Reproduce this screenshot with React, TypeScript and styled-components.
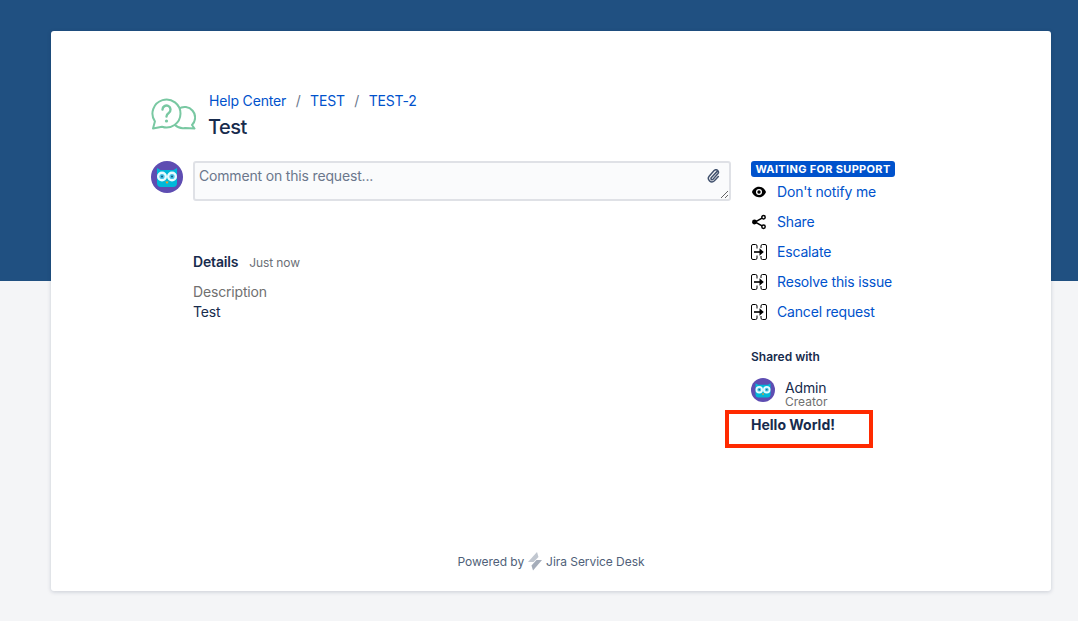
import React from "react";
import styled, { createGlobalStyle } from "styled-components";

const Global = createGlobalStyle`
  html, body {
    margin: 0;
    padding: 0;
  }
  body {
    min-height: 621px;
    background: linear-gradient(#205081 281px, #f4f5f7 281px);
    font-family: Inter, "Liberation Sans", sans-serif;
    font-size: 14px;
    letter-spacing: -0.17px;
    color: #172b4d;
    overflow: hidden;
  }
`;

const Card = styled.main`
  box-sizing: border-box;
  width: 1000px;
  height: 560px;
  margin: 31px 0 0 51px;
  padding: 60px 100px 0;
  background: #fff;
  border-radius: 3px;
  box-shadow: 0 1px 4px rgba(9, 30, 66, 0.18);
  display: flex;
  flex-direction: column;
`;

const Header = styled.header`
  display: flex;
  align-items: flex-start;
  gap: 13px;
  height: 70px;
`;

const HelpSvg = styled.svg`
  flex: none;
  margin: 7px 0 0 0;
`;

const Titles = styled.div`
  display: flex;
  flex-direction: column;
  margin-top: -1px;
`;

const Crumbs = styled.nav`
  display: flex;
  align-items: center;
  height: 20px;
  gap: 9.5px;
  font-size: 14px;
  color: #6b778c;
`;

const Link = styled.a`
  color: #0052cc;
  text-decoration: none;
`;

const Title = styled.h1`
  margin: 5px 0 0 -1px;
  font-size: 20px;
  line-height: 24px;
  font-weight: 500;
  letter-spacing: -0.5px;
  color: #172b4d;
`;

const Columns = styled.div`
  display: flex;
  flex: 1;
`;

const Activity = styled.section`
  width: 580px;
  margin-right: 20px;
`;

const CommentRow = styled.div`
  display: flex;
  gap: 10px;
`;

const CommentBox = styled.div`
  position: relative;
  width: 538px;
  height: 40px;
`;

const CommentInput = styled.textarea`
  display: block;
  box-sizing: border-box;
  width: 100%;
  height: 40px;
  padding: 3px 4px;
  border: 2px solid #dfe1e6;
  border-radius: 3px;
  background: #fafbfc;
  font: 14px/20px Inter, "Liberation Sans", sans-serif;
  letter-spacing: -0.17px;
  outline: none;
  &::placeholder {
    color: #6b778c;
    opacity: 1;
  }
`;

const Clip = styled.svg`
  position: absolute;
  top: 8px;
  right: 11px;
`;

const Details = styled.div`
  margin: 51px 0 0 42px;
`;

const DetailsHead = styled.div`
  display: flex;
  align-items: baseline;
  gap: 11px;
  line-height: 20px;
`;

const DetailsLabel = styled.strong`
  font-weight: 600;
`;

const Stamp = styled.span`
  font-size: 12px;
  letter-spacing: -0.1px;
  color: #6b6f76;
`;

const FieldName = styled.div`
  margin-top: 9px;
  line-height: 20px;
  color: #707070;
`;

const FieldValue = styled.div`
  line-height: 20px;
`;

const Side = styled.aside`
  display: flex;
  flex-direction: column;
  align-items: flex-start;
`;

const Status = styled.span`
  box-sizing: border-box;
  width: 144px;
  height: 16px;
  border-radius: 3px;
  background: #0052cc;
  color: #fff;
  font-size: 11px;
  line-height: 16px;
  font-weight: 700;
  letter-spacing: 0.33px;
  text-align: center;
  white-space: nowrap;
`;

const Actions = styled.ul`
  list-style: none;
  margin: 0;
  padding: 0;
`;

const Action = styled.li`
  display: flex;
  align-items: center;
  height: 30px;
  gap: 10px;
  ${Link} {
    margin-top: -2px;
  }
`;

const ActionIcon = styled.svg`
  display: block;
  flex: none;
`;

const SharedTitle = styled.h2`
  margin: 22px 0 0;
  font-size: 12px;
  line-height: 16px;
  font-weight: 600;
  letter-spacing: 0;
  color: #172b4d;
`;

const Person = styled.div`
  display: flex;
  align-items: flex-start;
  gap: 10px;
  margin-top: 13px;
`;

const PersonText = styled.div`
  display: flex;
  flex-direction: column;
  margin-top: 2px;
`;

const PersonName = styled.span`
  font-size: 14px;
  line-height: 16px;
`;

const PersonRole = styled.span`
  font-size: 12px;
  line-height: 12px;
  letter-spacing: 0;
  color: #707070;
`;

const Panel = styled.div`
  box-sizing: border-box;
  width: 148px;
  height: 38px;
  margin: 2px 0 0 -26px;
  padding: 1px 0 0 22px;
  border: 4px solid #ff2a00;
  font-size: 14px;
  line-height: 20px;
  font-weight: 700;
  letter-spacing: 0;
  color: #172b4d;
`;

const Footer = styled.footer`
  display: flex;
  justify-content: center;
  align-items: center;
  gap: 3px;
  height: 20px;
  margin: 0 0 20px;
  font-size: 12px;
  letter-spacing: -0.05px;
  color: #505f79;
`;

const Owl = ({ size }: { size: number }) => (
  <svg width={size} height={size} viewBox="0 0 32 32">
    <circle cx="16" cy="16" r="16" fill="#5e4db2" />
    <path d="M6 7l3.500 2h13L26 7v15a4 4 0 0 1-4 4H10a4 4 0 0 1-4-4z" fill="#00b8d9" />
    <circle cx="11" cy="15.500" r="5" fill="#e6fcff" />
    <circle cx="21" cy="15.500" r="5" fill="#e6fcff" />
    <circle cx="11" cy="15.500" r="2.600" fill="#4cc4e8" />
    <circle cx="21" cy="15.500" r="2.600" fill="#4cc4e8" />
    <circle cx="11" cy="15.500" r="1" fill="#0a5a7a" />
    <circle cx="21" cy="15.500" r="1" fill="#0a5a7a" />
    <path d="M14.300 20.500h3.400L16 23z" fill="#ff991f" />
  </svg>
);

const HelpIcon = () => (
  <HelpSvg width="45" height="34" viewBox="0 0 45 34" fill="none" stroke="#79c8a2" strokeWidth="2" strokeLinejoin="round">
    <path d="M27.500 11A10.500 10.500 0 0 1 41 27l2.500 3.500L34 30c-3 .5-7 0-10-3" />
    <path d="M3.900 23.400A14 14 0 1 1 11 28.800L2 30.500z" fill="#fff" />
    <path d="M11.500 11.500a4 4 0 1 1 6.200 3.400c-1.500 1-2.200 1.700-2.200 3.600" strokeLinecap="round" strokeWidth="2.400" />
    <circle cx="15.500" cy="23" r="1.600" fill="#79c8a2" stroke="none" />
  </HelpSvg>
);

const EyeIcon = () => (
  <ActionIcon width="16" height="16" viewBox="0 0 16 16">
    <path d="M8 2.800c3.600 0 6.200 2.700 7 5.200-.8 2.500-3.400 5.200-7 5.200S1.800 10.500 1 8c.8-2.500 3.400-5.200 7-5.200z" fill="#000" />
    <circle cx="8" cy="8" r="3" fill="#fff" />
    <circle cx="8" cy="8" r="1.700" fill="#000" />
  </ActionIcon>
);

const ShareIcon = () => (
  <ActionIcon width="16" height="16" viewBox="0 0 16 16" fill="none" stroke="#000" strokeWidth="1.500">
    <path d="M11.500 3.800L4 8l7.500 4.200" />
    <circle cx="3.500" cy="8" r="1.700" fill="#000" />
    <circle cx="12.500" cy="3.300" r="1.700" fill="#fff" />
    <circle cx="12.500" cy="12.700" r="1.700" fill="#fff" />
  </ActionIcon>
);

const TransitionIcon = () => (
  <ActionIcon width="16" height="16" viewBox="0 0 16 16" fill="none" stroke="#000" strokeWidth="1">
    <path d="M6 4.500V2A1.500 1.500 0 0 0 4.500.5H2A1.500 1.500 0 0 0 .5 2v12A1.500 1.500 0 0 0 2 15.500h2.500A1.500 1.500 0 0 0 6 14v-2.500" />
    <path d="M10 4V2A1.500 1.500 0 0 1 11.500.5H14A1.500 1.500 0 0 1 15.500 2v12a1.500 1.500 0 0 1-1.500 1.500h-2.500A1.500 1.500 0 0 1 10 14v-2" />
    <path d="M3 8h6" strokeWidth="2" stroke="#333" />
    <path d="M8.500 4.200L12.800 8l-4.300 3.800z" fill="#000" stroke="none" />
  </ActionIcon>
);

const actions = [
  { label: "Don't notify me", icon: <EyeIcon /> },
  { label: "Share", icon: <ShareIcon /> },
  { label: "Escalate", icon: <TransitionIcon /> },
  { label: "Resolve this issue", icon: <TransitionIcon /> },
  { label: "Cancel request", icon: <TransitionIcon /> },
];

export default function App() {
  return (
    <>
      <Global />
      <Card>
        <Header>
          <HelpIcon />
          <Titles>
            <Crumbs>
              <Link href="#">Help Center</Link>
              <span>/</span>
              <Link href="#">TEST</Link>
              <span>/</span>
              <Link href="#">TEST-2</Link>
            </Crumbs>
            <Title>Test</Title>
          </Titles>
        </Header>
        <Columns>
          <Activity>
            <CommentRow>
              <Owl size={32} />
              <CommentBox>
                <CommentInput placeholder="Comment on this request..." />
                <Clip width="14" height="14" viewBox="0 0 16 16" fill="none" stroke="#42526e" strokeWidth="1.700" strokeLinecap="round">
                  <path d="M12.500 3.500L6 10.500a1.300 1.300 0 0 0 2 1.800l5.500-6.300a2.800 2.800 0 0 0-4.200-3.700L3.800 8.500a4 4 0 0 0 5.800 5.500l4.500-5" transform="translate(0 -.5)" />
                </Clip>
              </CommentBox>
            </CommentRow>
            <Details>
              <DetailsHead>
                <DetailsLabel>Details</DetailsLabel>
                <Stamp>Just now</Stamp>
              </DetailsHead>
              <FieldName>Description</FieldName>
              <FieldValue>Test</FieldValue>
            </Details>
          </Activity>
          <Side>
            <Status>WAITING FOR SUPPORT</Status>
            <Actions>
              {actions.map((a) => (
                <Action key={a.label}>
                  {a.icon}
                  <Link href="#">{a.label}</Link>
                </Action>
              ))}
            </Actions>
            <SharedTitle>Shared with</SharedTitle>
            <Person>
              <Owl size={24} />
              <PersonText>
                <PersonName>Admin</PersonName>
                <PersonRole>Creator</PersonRole>
              </PersonText>
            </Person>
            <Panel>Hello World!</Panel>
          </Side>
        </Columns>
        <Footer>
          <span>Powered by</span>
          <svg width="16" height="20" viewBox="0 0 16 20">
            <path d="M10 1L1 11h5.500L11.500 6z" fill="#c1c7d0" />
            <path d="M15 9H9.500L4.500 14.500 6 19.500z" fill="#a5adba" />
          </svg>
          <span>Jira Service Desk</span>
        </Footer>
      </Card>
    </>
  );
}
